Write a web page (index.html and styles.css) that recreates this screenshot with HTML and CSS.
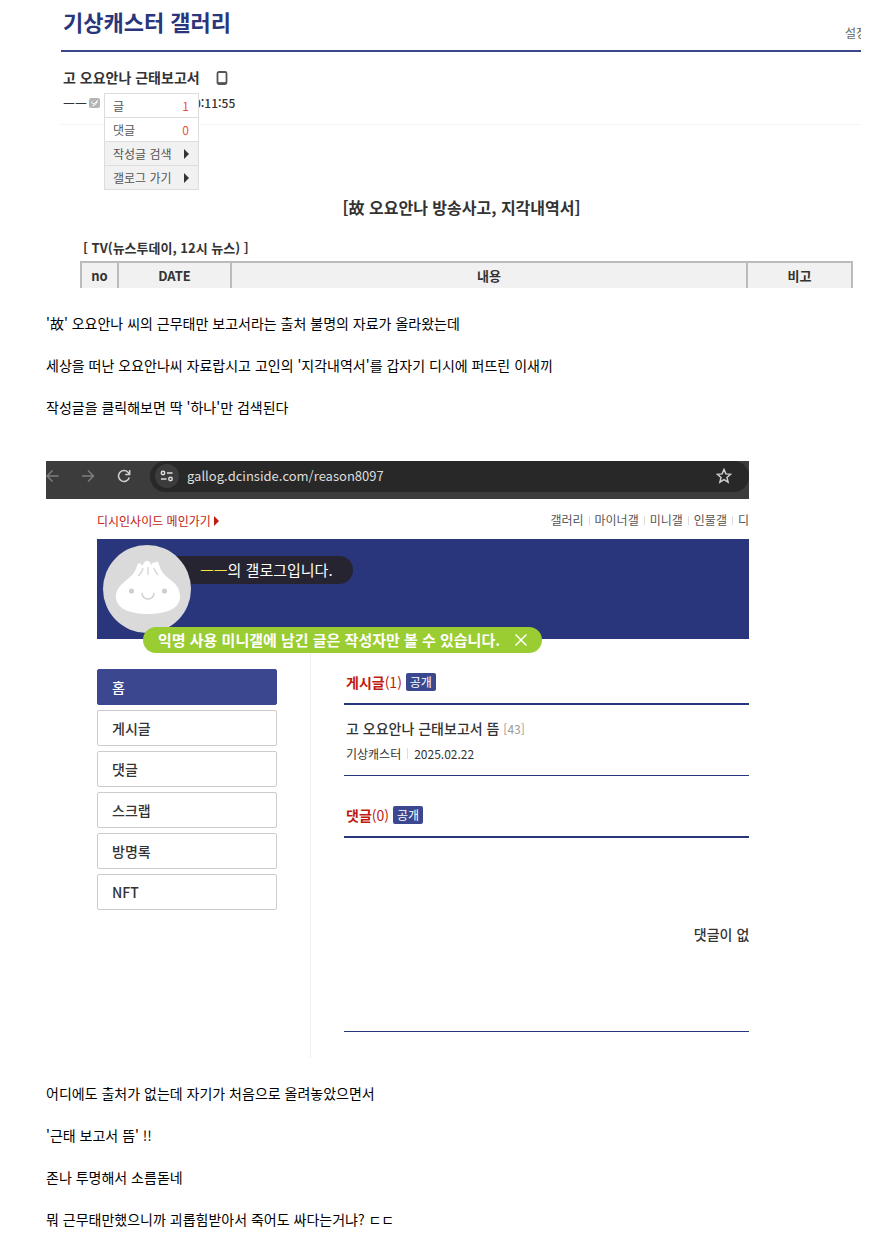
FILE: index.html
```html
<!DOCTYPE html>
<html lang="ko">
<head>
  <meta charset="UTF-8" />
  <meta name="viewport" content="width=device-width, initial-scale=1" />
  <title>기상캐스터 갤러리</title>
  <link rel="stylesheet" href="styles.css">
</head>
<body>

  <article class="post">

    <section class="gallery">
      <header class="gallery-head">
        <h1>기상캐스터 갤러리</h1>
        <a href="#" class="setting">설정</a>
      </header>

      <div class="gallery-info">
        <h2>고 오요안나 근태보고서
          <svg class="phone" viewBox="0 0 12 14" width="12" height="14">
            <rect x="1.5" y="1" width="9" height="12" rx="1.5" fill="none" stroke="#555" stroke-width="1.8"/>
            <path d="M2 11.8h8" stroke="#555" stroke-width="1.4"/>
          </svg>
        </h2>
        <div class="writer">
          <span>ㅡㅡ</span>
          <svg viewBox="0 0 11 10" width="11" height="10">
            <rect width="11" height="10" rx="2" fill="#b5b5b5"/>
            <path d="M3 3.5a1.500 1.500 0 0 0 3 1.500L8.500 2.500 6.500 6.500 3.500 8" fill="none" stroke="#fff"/>
          </svg>
          <span class="date">0:11:55</span>
          <ul class="user-menu">
            <li><a href="#">글 <em>1</em></a></li>
            <li><a href="#">댓글 <em>0</em></a></li>
            <li class="gray"><a href="#">작성글 검색 <i class="arrow"></i></a></li>
            <li class="gray"><a href="#">갤로그 가기 <i class="arrow"></i></a></li>
          </ul>
        </div>
      </div>

      <div class="report">
        <h3>[故 오요안나 방송사고, 지각내역서]</h3>
        <h4>[ TV(뉴스투데이, 12시 뉴스) ]</h4>
        <table>
          <thead>
            <tr>
              <th class="col-no">no</th>
              <th class="col-date">DATE</th>
              <th>내용</th>
              <th class="col-note">비고</th>
            </tr>
          </thead>
        </table>
      </div>
    </section>

    <div class="text">
      <p>'故' 오요안나 씨의 근무태만 보고서라는 출처 불명의 자료가 올라왔는데</p>
      <p>세상을 떠난 오요안나씨 자료랍시고 고인의 '지각내역서'를 갑자기 디시에 퍼뜨린 이새끼</p>
      <p>작성글을 클릭해보면 딱 '하나'만 검색된다</p>
    </div>

    <section class="browser">
      <div class="toolbar">
        <button type="button" class="back" aria-label="뒤로">
          <svg viewBox="0 0 14 14" width="14" height="14"><path d="M12.500 7H1M6.500 1.500L1 7l5.500 5.500" stroke="#7d7d7d"/></svg>
        </button>
        <button type="button" class="forward" aria-label="앞으로">
          <svg viewBox="0 0 14 14" width="14" height="14"><path d="M1 7h11M7 1.500L12.500 7 7 12.500" stroke="#7d7d7d"/></svg>
        </button>
        <button type="button" class="reload" aria-label="새로고침">
          <svg viewBox="0 0 14 14" width="14" height="14"><path d="M12.300 8.500A5.500 5.500 0 1 1 11 3.200L12.500 5M12.700 1v4.500H8.200" stroke="#d0d0d0"/></svg>
        </button>
        <div class="address">
          <span class="site-info">
            <svg viewBox="0 0 14 12" width="14" height="12">
              <circle cx="3" cy="3" r="1.700" stroke="#ddd"/>
              <path d="M7 3h5.500M1 9h5.500" stroke="#ddd"/>
              <circle cx="10.500" cy="9" r="1.700" stroke="#ddd"/>
            </svg>
          </span>
          <input type="text" aria-label="주소" value="gallog.dcinside.com/reason8097">
          <button type="button" class="star" aria-label="북마크">
            <svg viewBox="0 0 16 16" width="16" height="16"><path d="M8 1.500l1.900 4.400 4.700.4-3.600 3.100 1.100 4.700L8 11.600l-4.100 2.500L5 9.400 1.400 6.300l4.700-.4z" stroke="#d0d0d0"/></svg>
          </button>
        </div>
      </div>

      <div class="gallog">
        <div class="top">
          <a href="#" class="main-link">디시인사이드 메인가기<i class="arrow"></i></a>
          <nav>
            <a href="#">갤러리</a>
            <a href="#">마이너갤</a>
            <a href="#">미니갤</a>
            <a href="#">인물갤</a>
            <a href="#">디</a>
          </nav>
        </div>

        <div class="banner">
          <p class="owner"><b>ㅡㅡ</b>의 갤로그입니다.</p>
          <svg class="avatar" viewBox="0 0 88 88" width="88" height="88">
            <circle cx="44" cy="44" r="44" fill="#dadada"/>
            <path d="M13 52C13 39 26 36 32 26C34 22 34 19 36 18Q38 18 39 21Q42 15 45 16Q47 16 48 20Q50 16 52 18Q54 14 56 19C57 27 64 32 70 37C75 41 77 46 77 52C77 64 62 69 45 69S13 64 13 52Z" fill="#fff"/>
            <path d="M40 23q-1 5-5 8M45 22v8M51 23q1 4 4 7" fill="none" stroke="#dadada"/>
            <circle cx="28.500" cy="46" r="2.600" fill="#cfcfcf"/>
            <circle cx="61.500" cy="46" r="2.600" fill="#cfcfcf"/>
            <path d="M39 48a6 6 0 0 0 12 0" fill="none" stroke="#cfcfcf"/>
          </svg>
          <div class="notice">
            익명 사용 미니갤에 남긴 글은 작성자만 볼 수 있습니다.
            <button type="button" aria-label="닫기">
              <svg viewBox="0 0 12 12" width="12" height="12"><path d="M.5.5l11 11M11.500.5l-11 11" stroke="#fff"/></svg>
            </button>
          </div>
        </div>

        <div class="columns">
          <ul class="side">
            <li><a href="#" class="on">홈</a></li>
            <li><a href="#">게시글</a></li>
            <li><a href="#">댓글</a></li>
            <li><a href="#">스크랩</a></li>
            <li><a href="#">방명록</a></li>
            <li><a href="#">NFT</a></li>
          </ul>

          <div class="content">
            <h3>게시글<span>(1)</span> <button type="button">공개</button></h3>
            <div class="box">
              <a href="#" class="subject">고 오요안나 근태보고서 뜸 <span>[43]</span></a>
              <p class="meta"><span>기상캐스터</span><span>2025.02.22</span></p>
            </div>
            <h3>댓글<span>(0)</span> <button type="button">공개</button></h3>
            <div class="box empty">댓글이 없습니다.</div>
          </div>
        </div>
      </div>
    </section>

    <div class="text">
      <p>어디에도 출처가 없는데 자기가 처음으로 올려놓았으면서</p>
      <p>'근태 보고서 뜸' !!</p>
      <p>존나 투명해서 소름돋네</p>
      <p>뭐 근무태만했으니까 괴롭힘받아서 죽어도 싸다는거냐? ㄷㄷ</p>
    </div>

  </article>

</body>
</html>
```
FILE: styles.css
```css
* {
  box-sizing: border-box;
}

body {
  margin: 0;
  background: #fff;
  color: #000;
  font-family: "Noto Sans CJK KR", "Noto Sans", sans-serif;
  font-size: 14px;
  line-height: 21px;
}

h1, h2, h3, h4, p, ul {
  margin: 0;
  padding: 0;
}

ul {
  list-style: none;
}

a {
  color: inherit;
  text-decoration: none;
}

button {
  padding: 0;
  border: none;
  background: none;
  color: inherit;
  font: inherit;
  cursor: pointer;
}

svg {
  display: block;
}

.post {
  padding: 0 8px 10px 46px;
}

.text {
  display: flex;
  flex-direction: column;
  gap: 21px;
  margin: 25px 0 43px;
}

.text:last-child {
  margin-bottom: 0;
}

.arrow {
  display: inline-block;
  border-left: 5px solid currentColor;
  border-top: 5px solid transparent;
  border-bottom: 5px solid transparent;
}

/* gallery */
.gallery {
  padding-left: 15px;
  overflow: hidden;
}

.gallery-head {
  display: flex;
  justify-content: space-between;
  align-items: flex-end;
  height: 52px;
  padding: 0 0 7px 2px;
  border-bottom: 2px solid #3b4890;
}

.gallery-head h1 {
  color: #29367c;
  font-size: 22px;
  line-height: 32px;
  font-weight: 700;
  padding-bottom: 6px;
}

.setting {
  margin-right: -6px;
  color: #666;
  font-size: 12px;
}

.gallery-info {
  padding: 15px 0 11px 2px;
  border-bottom: 1px solid #f3f3f3;
  color: #333;
}

.gallery-info h2 {
  display: flex;
  align-items: center;
  gap: 16px;
  font-size: 14px;
  line-height: 21px;
}

.writer {
  position: relative;
  display: flex;
  align-items: center;
  gap: 2px;
  margin-top: 4px;
  font-size: 13px;
}

.writer .date {
  margin-left: 92px;
  font-size: 12px;
  font-weight: 500;
}

.user-menu {
  position: absolute;
  top: 1px;
  left: 41px;
  width: 95px;
  border: 1px solid #ddd;
  background: #fff;
  color: #555;
  font-size: 12px;
  line-height: 23px;
}

.user-menu li + li {
  border-top: 1px solid #ddd;
}

.user-menu a {
  display: flex;
  align-items: center;
  justify-content: space-between;
  padding: 0 9px 0 8px;
}

.user-menu em {
  color: #f0533a;
  font-style: normal;
}

.user-menu .gray {
  background: #f1f1f1;
}

.user-menu .arrow {
  color: #333;
}

.report {
  padding: 70px 8px 0 19px;
  color: #333;
}

.report h3 {
  padding-right: 10px;
  font-size: 16px;
  line-height: 24px;
  text-align: center;
}

.report h4 {
  margin: 19px 0 3px 3px;
  font-size: 13px;
  line-height: 20px;
}

.report table {
  width: 100%;
  table-layout: fixed;
  border-collapse: collapse;
}

.report th {
  height: 26px;
  padding: 0;
  border: 2px solid #bbb;
  border-bottom: none;
  background: #f1f1f1;
  font-size: 13px;
  line-height: 24px;
}

.report .col-no {
  width: 37px;
}

.report .col-date {
  width: 113px;
}

.report .col-note {
  width: 105px;
}

/* browser */
.browser {
  max-width: 703px;
  overflow: hidden;
}

.browser svg path,
.browser svg circle {
  stroke-width: 1.5px;
}

.toolbar {
  display: flex;
  align-items: flex-start;
  height: 38px;
  background: #3c3c3c;
}

.toolbar svg {
  fill: none;
}

.toolbar > button {
  display: flex;
  align-items: center;
  height: 29px;
}

.forward {
  margin-left: 21px;
}

.reload {
  margin: 0 19px 0 22px;
}

.address {
  flex: 1;
  display: flex;
  align-items: center;
  height: 31px;
  padding: 0 17px 2px 5px;
  border-radius: 16px;
  background: #282828;
}

.site-info {
  display: flex;
  align-items: center;
  justify-content: center;
  width: 24px;
  height: 24px;
  border-radius: 50%;
  background: #3c3c3c;
}

.address input {
  flex: 1;
  min-width: 0;
  padding: 0 8px;
  border: none;
  outline: none;
  background: none;
  color: #dedede;
  font: inherit;
  font-size: 13px;
}

.gallog {
  padding-left: 51px;
}

.top {
  display: flex;
  justify-content: space-between;
  align-items: center;
  height: 40px;
  font-size: 12px;
}

.main-link {
  padding-top: 3px;
  color: #c01a10;
}

.main-link .arrow {
  margin-left: 3px;
}

.top nav {
  display: flex;
  color: #555;
}

.top nav a + a::before {
  content: "";
  display: inline-block;
  width: 1px;
  height: 9px;
  margin: 0 5px;
  background: #ddd;
}

.banner {
  position: relative;
  height: 100px;
  padding-top: 17px;
  background: #29367c;
}

.owner {
  width: 196px;
  margin-left: 60px;
  padding-left: 43px;
  border-radius: 14px;
  background: #262430;
  color: #fff;
  font-size: 15px;
  line-height: 28px;
  white-space: nowrap;
}

.owner b {
  color: #ffe14a;
  font-weight: 400;
}

.avatar {
  position: absolute;
  top: 6px;
  left: 6px;
}

.notice {
  position: absolute;
  top: 88px;
  left: 46px;
  display: flex;
  align-items: center;
  gap: 15px;
  padding: 0 15px 0 15px;
  border-radius: 13px;
  background: #9acd32;
  color: #fff;
  font-size: 15px;
  font-weight: 700;
  line-height: 26px;
  white-space: nowrap;
}

.columns {
  display: flex;
  gap: 33px;
}

.side {
  display: flex;
  flex-direction: column;
  gap: 5px;
  width: 214px;
  min-height: 418px;
  padding: 30px 33px 0 0;
  border-right: 1px solid #eee;
  flex-shrink: 0;
}

.side a {
  display: block;
  padding: 0 14px;
  border: 1px solid #ccc;
  border-radius: 2px;
  color: #333;
  font-weight: 500;
  line-height: 34px;
}

.side .on {
  border-color: #3b4890;
  background: #3b4890;
  color: #fff;
}

/* the list is wider than the window and runs off its right edge */
.content {
  flex: 0 0 798px;
  padding-top: 30px;
}

.content h3 {
  display: flex;
  align-items: center;
  height: 36px;
  padding: 0 0 8px 2px;
  border-bottom: 2px solid #29367c;
  color: #c01a10;
  font-size: 14px;
}

.content h3 span {
  font-weight: 400;
}

.content h3 button {
  width: 30px;
  margin-left: 4px;
  border-radius: 2px;
  background: #3b4890;
  color: #fff;
  font-size: 12px;
  font-weight: 400;
  line-height: 18px;
}

.box {
  height: 71px;
  padding: 13px 2px 0;
  margin-bottom: 26px;
  border-bottom: 1px solid #29367c;
  color: #333;
}

.subject {
  font-weight: 500;
}

.subject span {
  color: #999;
  font-size: 12px;
  font-weight: 400;
}

.meta {
  display: flex;
  align-items: center;
  margin-top: 4px;
  font-size: 12px;
}

.meta span + span::before {
  content: "";
  display: inline-block;
  width: 1px;
  height: 11px;
  margin: 0 6px;
  background: #ddd;
}

.box.empty {
  display: flex;
  align-items: center;
  justify-content: center;
  height: 194px;
  padding: 0;
  font-weight: 500;
}
```
